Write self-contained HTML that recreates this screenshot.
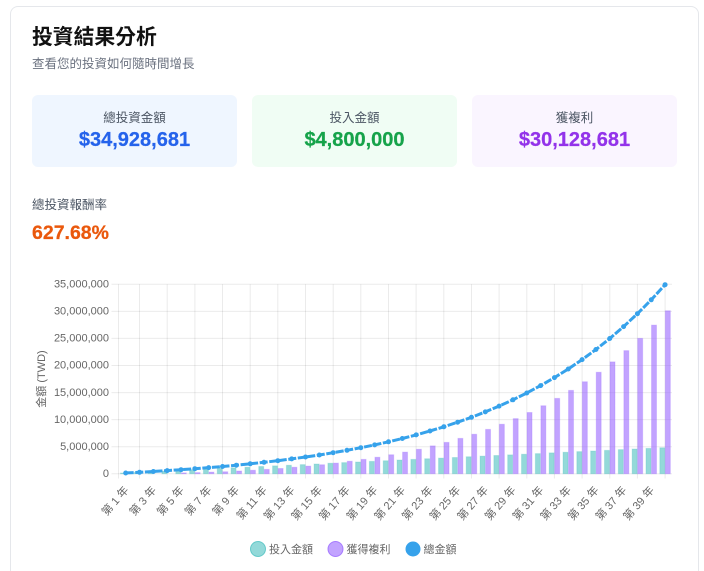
<!DOCTYPE html>
<html lang="zh-Hant">
<head>
<meta charset="utf-8">
<title>投資結果分析</title>
<style>
html,body{margin:0;padding:0;background:#fff;width:704px;height:571px;overflow:hidden;}
body{font-family:"Liberation Sans","Noto Sans CJK TC",sans-serif;}
#wrap{position:relative;width:704px;height:571px;overflow:hidden;}
.panel{position:absolute;left:9.5px;top:6px;width:689px;height:565px;border:1px solid #e5e7eb;border-bottom:none;border-radius:8px 8px 0 0;box-sizing:border-box;background:#fff;}
.t{position:absolute;white-space:nowrap;}
.card{position:absolute;top:95px;width:205px;height:72px;border-radius:6px;text-align:center;}
.card .l{position:absolute;left:0;right:0;top:14px;font-size:12.5px;line-height:18px;color:#4b5563;}
.card .v{position:absolute;left:0;right:0;top:33px;font-size:20px;line-height:24px;font-weight:700;-webkit-text-stroke:.25px currentColor;}
svg{position:absolute;left:0;top:0;display:block;}
svg text{font-family:"Liberation Sans","Noto Sans CJK TC",sans-serif;font-size:11px;fill:#666;}
</style>
</head>
<body>
<div id="wrap">
<div class="panel"></div>
<div class="t" style="left:32px;top:24px;font-size:20.8px;line-height:28px;font-weight:700;color:#111;">投資結果分析</div>
<div class="t" style="left:32px;top:55px;font-size:12.5px;line-height:18px;color:#6b7280;">查看您的投資如何隨時間增長</div>

<div class="card" style="left:32px;background:#eff6ff;"><div class="l">總投資金額</div><div class="v" style="color:#2563eb;">$34,928,681</div></div>
<div class="card" style="left:252px;background:#f0fdf4;"><div class="l">投入金額</div><div class="v" style="color:#16a34a;">$4,800,000</div></div>
<div class="card" style="left:472px;background:#faf5ff;"><div class="l">獲複利</div><div class="v" style="color:#9333ea;">$30,128,681</div></div>

<div class="t" style="left:32px;top:196px;font-size:12.5px;line-height:18px;color:#4b5563;">總投資報酬率</div>
<div class="t" style="left:32px;top:221px;font-size:19.5px;line-height:24px;font-weight:700;color:#ea580c;-webkit-text-stroke:.25px currentColor;">627.68%</div>

<svg width="704" height="571" viewBox="0 0 704 571">
  <!-- horizontal grid -->
  <path d="M111.5 284.3H672M111.5 311.4H672M111.5 338.4H672M111.5 365.5H672M111.5 392.6H672M111.5 419.6H672M111.5 446.7H672M111.5 473.7H672" stroke="#000" stroke-opacity=".08" stroke-width="1" fill="none"/>
  <!-- vertical grid -->
  <path d="M118.5 284.3V478.5M139.5 284.3V478.5M167.2 284.3V478.5M194.9 284.3V478.5M222.5 284.3V478.5M250.2 284.3V478.5M277.8 284.3V478.5M305.5 284.3V478.5M333.2 284.3V478.5M360.8 284.3V478.5M388.5 284.3V478.5M416.1 284.3V478.5M443.8 284.3V478.5M471.5 284.3V478.5M499.1 284.3V478.5M526.8 284.3V478.5M554.4 284.3V478.5M582.1 284.3V478.5M609.8 284.3V478.5M637.4 284.3V478.5M665.1 284.3V478.5" stroke="#000" stroke-opacity=".08" stroke-width="1" fill="none"/>

  <!-- invested bars -->
  <path fill="#4bc0c0" fill-opacity=".6" stroke="#4bc0c0" stroke-opacity=".25" stroke-width="1" d="M120.44 473.05h4.98V473.7h-4.98zM134.27 472.4h4.98V473.7h-4.98zM148.1 471.75h4.98V473.7h-4.98zM161.93 471.1h4.98V473.7h-4.98zM175.76 470.45h4.98V473.7h-4.98zM189.59 469.8h4.98V473.7h-4.98zM203.42 469.15h4.98V473.7h-4.98zM217.25 468.5h4.98V473.7h-4.98zM231.08 467.85h4.98V473.7h-4.98zM244.91 467.2h4.98V473.7h-4.98zM258.74 466.55h4.98V473.7h-4.98zM272.57 465.9h4.98V473.7h-4.98zM286.4 465.26h4.98V473.7h-4.98zM300.23 464.6h4.98V473.7h-4.98zM314.06 463.96h4.98V473.7h-4.98zM327.89 463.3h4.98V473.7h-4.98zM341.72 462.66h4.98V473.7h-4.98zM355.55 462h4.98V473.7h-4.98zM369.38 461.36h4.98V473.7h-4.98zM383.21 460.7h4.98V473.7h-4.98zM397.04 460.06h4.98V473.7h-4.98zM410.87 459.4h4.98V473.7h-4.98zM424.7 458.76h4.98V473.7h-4.98zM438.53 458.1h4.98V473.7h-4.98zM452.36 457.46h4.98V473.7h-4.98zM466.19 456.8h4.98V473.7h-4.98zM480.02 456.17h4.98V473.7h-4.98zM493.85 455.5h4.98V473.7h-4.98zM507.68 454.87h4.98V473.7h-4.98zM521.51 454.2h4.98V473.7h-4.98zM535.34 453.57h4.98V473.7h-4.98zM549.17 452.92h4.98V473.7h-4.98zM563 452.27h4.98V473.7h-4.98zM576.83 451.62h4.98V473.7h-4.98zM590.66 450.97h4.98V473.7h-4.98zM604.49 450.32h4.98V473.7h-4.98zM618.32 449.67h4.98V473.7h-4.98zM632.15 449.02h4.98V473.7h-4.98zM645.98 448.37h4.98V473.7h-4.98zM659.81 447.72h4.98V473.7h-4.98z"/>
  <!-- profit bars -->
  <path fill="#9966ff" fill-opacity=".6" stroke="#9966ff" stroke-opacity=".25" stroke-width="1" d="M181.3 472.9h4.98V473.7h-4.98zM195.13 472.6h4.98V473.7h-4.98zM208.96 472.1h4.98V473.7h-4.98zM222.79 471.7h4.98V473.7h-4.98zM236.62 471h4.98V473.7h-4.98zM250.45 470.3h4.98V473.7h-4.98zM264.28 469.4h4.98V473.7h-4.98zM278.11 468.5h4.98V473.7h-4.98zM291.94 467.3h4.98V473.7h-4.98zM305.77 466.1h4.98V473.7h-4.98zM319.6 464.7h4.98V473.7h-4.98zM333.43 463.1h4.98V473.7h-4.98zM347.26 461.3h4.98V473.7h-4.98zM361.09 459.4h4.98V473.7h-4.98zM374.92 457.2h4.98V473.7h-4.98zM388.75 454.8h4.98V473.7h-4.98zM402.58 452.1h4.98V473.7h-4.98zM416.41 449.2h4.98V473.7h-4.98zM430.24 445.9h4.98V473.7h-4.98zM444.07 442.4h4.98V473.7h-4.98zM457.9 438.4h4.98V473.7h-4.98zM471.73 434.2h4.98V473.7h-4.98zM485.56 429.4h4.98V473.7h-4.98zM499.39 424.3h4.98V473.7h-4.98zM513.22 418.6h4.98V473.7h-4.98zM527.05 412.5h4.98V473.7h-4.98zM540.88 405.7h4.98V473.7h-4.98zM554.71 398.4h4.98V473.7h-4.98zM568.54 390.4h4.98V473.7h-4.98zM582.37 381.7h4.98V473.7h-4.98zM596.2 372.2h4.98V473.7h-4.98zM610.03 361.9h4.98V473.7h-4.98zM623.86 350.6h4.98V473.7h-4.98zM637.69 338.4h4.98V473.7h-4.98zM651.52 325.1h4.98V473.7h-4.98zM665.35 310.7h4.98V473.7h-4.98z"/>

  <!-- total line -->
  <polyline fill="none" stroke="#36a2eb" stroke-width="3" stroke-dasharray="8 1.6" points="125.7,473 139.53,472.3 153.36,471.5 167.19,470.6 181.02,469.7 194.85,468.7 208.68,467.6 222.51,466.5 236.34,465.2 250.17,463.8 264,462.3 277.83,460.7 291.66,458.9 305.49,457 319.32,455 333.15,452.7 346.98,450.3 360.81,447.7 374.64,444.9 388.47,441.8 402.3,438.5 416.13,434.9 429.96,431 443.79,426.8 457.62,422.2 471.45,417.3 485.28,411.9 499.11,406.1 512.94,399.8 526.77,393 540.6,385.6 554.43,377.6 568.26,369 582.09,359.6 595.92,349.5 609.75,338.5 623.58,326.6 637.41,313.7 651.24,299.8 665.07,284.7"/>
  <path fill="none" stroke="#36a2eb" stroke-width="5" stroke-linecap="round" d="M125.7 473h.01M139.53 472.3h.01M153.36 471.5h.01M167.19 470.6h.01M181.02 469.7h.01M194.85 468.7h.01M208.68 467.6h.01M222.51 466.5h.01M236.34 465.2h.01M250.17 463.8h.01M264 462.3h.01M277.83 460.7h.01M291.66 458.9h.01M305.49 457h.01M319.32 455h.01M333.15 452.7h.01M346.98 450.3h.01M360.81 447.7h.01M374.64 444.9h.01M388.47 441.8h.01M402.3 438.5h.01M416.13 434.9h.01M429.96 431h.01M443.79 426.8h.01M457.62 422.2h.01M471.45 417.3h.01M485.28 411.9h.01M499.11 406.1h.01M512.94 399.8h.01M526.77 393h.01M540.6 385.6h.01M554.43 377.6h.01M568.26 369h.01M582.09 359.6h.01M595.92 349.5h.01M609.75 338.5h.01M623.58 326.6h.01M637.41 313.7h.01M651.24 299.8h.01M665.07 284.7h.01"/>

  <!-- y labels -->
  <g text-anchor="end">
    <text x="109" y="287.5">35,000,000</text>
    <text x="109" y="314.5">30,000,000</text>
    <text x="109" y="341.5">25,000,000</text>
    <text x="109" y="368.5">20,000,000</text>
    <text x="109" y="396">15,000,000</text>
    <text x="109" y="423">10,000,000</text>
    <text x="109" y="450">5,000,000</text>
    <text x="109" y="477">0</text>
  </g>
  <text transform="translate(45 379) rotate(-90)" text-anchor="middle">金額 (TWD)</text>

  <!-- x labels -->
  <g text-anchor="end">
    <text transform="translate(129.2 490.5) rotate(-49)">第 1 年</text>
    <text transform="translate(156.9 490.5) rotate(-49)">第 3 年</text>
    <text transform="translate(184.5 490.5) rotate(-49)">第 5 年</text>
    <text transform="translate(212.2 490.5) rotate(-49)">第 7 年</text>
    <text transform="translate(239.8 490.5) rotate(-49)">第 9 年</text>
    <text transform="translate(267.5 490.5) rotate(-49)">第 11 年</text>
    <text transform="translate(295.2 490.5) rotate(-49)">第 13 年</text>
    <text transform="translate(322.8 490.5) rotate(-49)">第 15 年</text>
    <text transform="translate(350.5 490.5) rotate(-49)">第 17 年</text>
    <text transform="translate(378.1 490.5) rotate(-49)">第 19 年</text>
    <text transform="translate(405.8 490.5) rotate(-49)">第 21 年</text>
    <text transform="translate(433.5 490.5) rotate(-49)">第 23 年</text>
    <text transform="translate(461.1 490.5) rotate(-49)">第 25 年</text>
    <text transform="translate(488.8 490.5) rotate(-49)">第 27 年</text>
    <text transform="translate(516.4 490.5) rotate(-49)">第 29 年</text>
    <text transform="translate(544.1 490.5) rotate(-49)">第 31 年</text>
    <text transform="translate(571.8 490.5) rotate(-49)">第 33 年</text>
    <text transform="translate(599.4 490.5) rotate(-49)">第 35 年</text>
    <text transform="translate(627.1 490.5) rotate(-49)">第 37 年</text>
    <text transform="translate(654.7 490.5) rotate(-49)">第 39 年</text>
  </g>

  <!-- legend -->
  <circle cx="258" cy="549" r="7.5" fill="#4bc0c0" fill-opacity=".6" stroke="#4bc0c0" stroke-opacity=".8" stroke-width="1"/>
  <text x="269" y="553">投入金額</text>
  <circle cx="335.5" cy="549" r="7.5" fill="#9966ff" fill-opacity=".6" stroke="#9966ff" stroke-opacity=".8" stroke-width="1"/>
  <text x="346.5" y="553">獲得複利</text>
  <circle cx="413" cy="549" r="7.5" fill="#36a2eb"/>
  <text x="423.5" y="553">總金額</text>
</svg>
</div>
</body>
</html>
